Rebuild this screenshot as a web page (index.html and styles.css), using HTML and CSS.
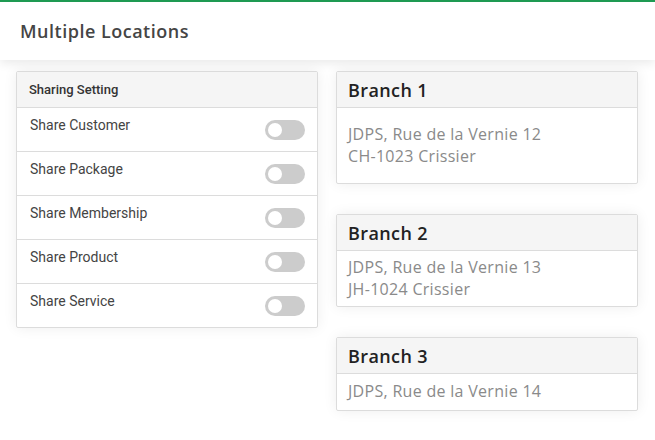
FILE: index.html
```html
<!DOCTYPE html>
<html lang="en">
<head>
<meta charset="utf-8">
<title>Multiple Locations</title>
<link rel="stylesheet" href="styles.css">
</head>
<body>
<header class="topbar">
  <h1 class="page-title">Multiple Locations</h1>
</header>
<main class="content">
  <section class="card settings">
    <div class="settings-head">Sharing Setting</div>
    <div class="setting-row"><span class="setting-label">Share Customer</span><span class="toggle"></span></div>
    <div class="setting-row"><span class="setting-label">Share Package</span><span class="toggle"></span></div>
    <div class="setting-row"><span class="setting-label">Share Membership</span><span class="toggle"></span></div>
    <div class="setting-row"><span class="setting-label">Share Product</span><span class="toggle"></span></div>
    <div class="setting-row"><span class="setting-label">Share Service</span><span class="toggle"></span></div>
  </section>
  <div class="branches">
    <section class="card branch">
      <div class="branch-head">Branch 1</div>
      <div class="branch-body branch-body-lg">JDPS, Rue de la Vernie 12<br>CH-1023 Crissier</div>
    </section>
    <section class="card branch">
      <div class="branch-head">Branch 2</div>
      <div class="branch-body">JDPS, Rue de la Vernie 13<br>JH-1024 Crissier</div>
    </section>
    <section class="card branch">
      <div class="branch-head">Branch 3</div>
      <div class="branch-body branch-body-single">JDPS, Rue de la Vernie 14</div>
    </section>
  </div>
</main>
</body>
</html>
```
FILE: styles.css
```css
* { box-sizing: border-box; }
html, body { margin: 0; padding: 0; }
body {
  background: #fff;
  font-family: "Open Sans", "Liberation Sans", sans-serif;
  width: 655px;
  height: 440px;
  overflow: hidden;
}
.topbar {
  border-top: 2px solid #1e9a52;
  height: 60px;
  background: #fff;
  box-shadow: 0 3px 10px rgba(0,0,0,0.09);
  display: flex;
  align-items: center;
  padding: 0 20px;
  position: relative;
  z-index: 1;
}
.page-title {
  margin: 0;
  font-size: 18px;
  font-weight: 600;
  color: #454545;
  letter-spacing: 0.5px;
  padding-bottom: 1px;
}
.content {
  display: grid;
  grid-template-columns: 302px 302px;
  column-gap: 18px;
  padding: 11px 17px 0 16px;
  align-items: start;
}
.card {
  border: 1px solid #dcdcdc;
  border-radius: 2px;
  background: #fff;
  box-shadow: 0 0 14px rgba(0,0,0,0.07);
}
.settings-head {
  height: 36px;
  background: #f5f5f5;
  border-bottom: 1px solid #dcdcdc;
  padding: 0 12px;
  display: flex;
  align-items: center;
  font-family: Roboto, "Liberation Sans", sans-serif;
  font-weight: 500;
  font-size: 13px;
  color: #333;
}
.setting-row {
  height: 44px;
  border-bottom: 1px solid #dcdcdc;
  display: flex;
  justify-content: space-between;
  align-items: center;
  padding: 0 12px 0 13px;
  font-family: Roboto, "Liberation Sans", sans-serif;
  font-size: 14px;
  color: #444;
}
.setting-row:last-child { border-bottom: 0; height: 43px; }
.setting-label {
  align-self: flex-start;
  line-height: 20px;
  margin-top: 7px;
}
.toggle {
  width: 40px;
  height: 20px;
  border-radius: 10px;
  background: #cccccc;
  position: relative;
}
.toggle::after {
  content: "";
  position: absolute;
  left: 3px;
  top: 3px;
  width: 14px;
  height: 14px;
  border-radius: 50%;
  background: #fff;
}
.branches {
  display: flex;
  flex-direction: column;
  gap: 30px;
}
.branch-head {
  height: 36px;
  background: #f5f5f5;
  border-bottom: 1px solid #dcdcdc;
  padding: 0 11px;
  display: flex;
  align-items: center;
  font-size: 18px;
  font-weight: 600;
  letter-spacing: 0.4px;
  color: #222;
}
.branch-body {
  padding: 5px 11px 6px;
  font-size: 16px;
  line-height: 22px;
  letter-spacing: 0.3px;
  color: #8a8a8a;
}
.branch-body-lg {
  padding: 15px 11px 16px;
}
.branch-body-single {
  padding: 6px 11px 8px;
}
```
